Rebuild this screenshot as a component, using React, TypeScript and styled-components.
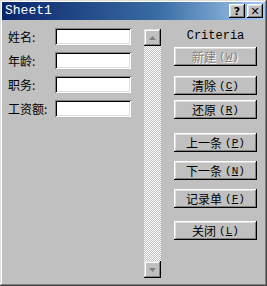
import React from "react"
import styled, { createGlobalStyle } from "styled-components"

const GlobalStyle = createGlobalStyle`
  html, body {
    margin: 0;
    padding: 0;
    background: #c0c0c0;
  }
`

const cjk = `"Noto Sans CJK SC", "DejaVu Sans", sans-serif`
const mono = `"Liberation Mono", "Noto Sans CJK SC", monospace`

const Window = styled.div`
  width: 267px;
  height: 286px;
  box-sizing: border-box;
  padding: 2px;
  background: #c0c0c0;
  box-shadow: inset -1px -1px #404040, inset 1px 1px #dfdfdf,
    inset -2px -2px #808080, inset 2px 2px #ffffff;
  display: flex;
  flex-direction: column;
  overflow: hidden;
`

const TitleBar = styled.div`
  height: 18px;
  background: linear-gradient(90deg, #0a246a 0%, #3a6ea5 60%, #a6caf0 100%);
  display: flex;
  align-items: center;
  padding: 0 2px 0 3px;
`

const TitleText = styled.div`
  flex: 1;
  color: #ffffff;
  font-family: ${mono};
  font-size: 13px;
  line-height: 14px;
`

const CaptionButton = styled.div`
  width: 16px;
  height: 14px;
  margin-left: 2px;
  box-sizing: border-box;
  background: #c0c0c0;
  box-shadow: inset -1px -1px #000, inset 1px 1px #fff,
    inset -2px -2px #808080, inset 2px 2px #dfdfdf;
  display: flex;
  align-items: center;
  justify-content: center;
  font-family: "DejaVu Sans", sans-serif;
  font-weight: bold;
  font-size: 11px;
  color: #000;
`

const Body = styled.div`
  flex: 1;
  display: flex;
`

const Fields = styled.div`
  width: 142px;
  padding: 8px 0 0 6px;
  box-sizing: border-box;
  display: flex;
  flex-direction: column;
  gap: 7px;
`

const FieldRow = styled.div`
  display: flex;
  align-items: center;
  height: 17px;
`

const Label = styled.div`
  width: 47px;
  font-family: ${cjk};
  font-size: 12px;
  color: #000;
  white-space: nowrap;
`

const Field = styled.div`
  width: 76px;
  height: 17px;
  box-sizing: border-box;
  background: #fff;
  box-shadow: inset 1px 1px #808080, inset -1px -1px #fff,
    inset 2px 2px #000, inset -2px -2px #dfdfdf;
`

const ScrollBar = styled.div`
  width: 17px;
  margin-top: 9px;
  height: 249px;
  display: flex;
  flex-direction: column;
`

const Track = styled.div`
  flex: 1;
  background: repeating-conic-gradient(#c0c0c0 0 25%, #ffffff 0 50%) 0 0 / 2px 2px;
`

const ArrowButton = styled.div`
  height: 17px;
  box-sizing: border-box;
  background: #c0c0c0;
  box-shadow: inset -1px -1px #000, inset 1px 1px #dfdfdf,
    inset -2px -2px #808080, inset 2px 2px #fff;
  display: flex;
  align-items: center;
  justify-content: center;
`

const Actions = styled.div`
  width: 83px;
  margin-left: 13px;
  padding-top: 9px;
  display: flex;
  flex-direction: column;
`

const Criteria = styled.div`
  height: 18px;
  text-align: center;
  font-family: ${mono};
  font-size: 12px;
  line-height: 14px;
  color: #000;
`

const Button = styled.div<{ $top: number; $disabled?: boolean }>`
  margin-top: ${({ $top }) => $top}px;
  height: 19px;
  box-sizing: border-box;
  background: #c0c0c0;
  box-shadow: inset -1px -1px #000, inset 1px 1px #fff,
    inset -2px -2px #808080, inset 2px 2px #dfdfdf;
  display: flex;
  align-items: center;
  justify-content: center;
  font-family: ${cjk};
  font-size: 12px;
  color: ${({ $disabled }) => ($disabled ? "#808080" : "#000")};
  text-shadow: ${({ $disabled }) => ($disabled ? "1px 1px #fff" : "none")};
  white-space: nowrap;

  u {
    font-family: ${mono};
    font-size: 11px;
  }
`

const Accel = styled.span`
  margin-left: 3px;
  font-family: ${mono};
  font-size: 11px;
`

const fields = ["姓名:", "年龄:", "职务:", "工资额:"]

const buttons = [
  { label: "新建", key: "W", top: 0, disabled: true },
  { label: "清除", key: "C", top: 10 },
  { label: "还原", key: "R", top: 5 },
  { label: "上一条", key: "P", top: 14 },
  { label: "下一条", key: "N", top: 9 },
  { label: "记录单", key: "F", top: 9 },
  { label: "关闭", key: "L", top: 13 },
]

function Arrow({ down }: { down?: boolean }) {
  return (
    <svg width="7" height="4" viewBox="0 0 7 4">
      <polygon
        points={down ? "0,0 7,0 3.5,4" : "3.5,0 7,4 0,4"}
        fill="#808080"
      />
    </svg>
  )
}

export default function App() {
  return (
    <>
      <GlobalStyle />
      <Window>
        <TitleBar>
          <TitleText>Sheet1</TitleText>
          <CaptionButton>?</CaptionButton>
          <CaptionButton>✕</CaptionButton>
        </TitleBar>
        <Body>
          <Fields>
            {fields.map(f => (
              <FieldRow key={f}>
                <Label>{f}</Label>
                <Field />
              </FieldRow>
            ))}
          </Fields>
          <ScrollBar>
            <ArrowButton>
              <Arrow />
            </ArrowButton>
            <Track />
            <ArrowButton>
              <Arrow down />
            </ArrowButton>
          </ScrollBar>
          <Actions>
            <Criteria>Criteria</Criteria>
            {buttons.map(b => (
              <Button key={b.label} $top={b.top} $disabled={b.disabled}>
                {b.label}
                <Accel>
                  (<u>{b.key}</u>)
                </Accel>
              </Button>
            ))}
          </Actions>
        </Body>
      </Window>
    </>
  )
}
